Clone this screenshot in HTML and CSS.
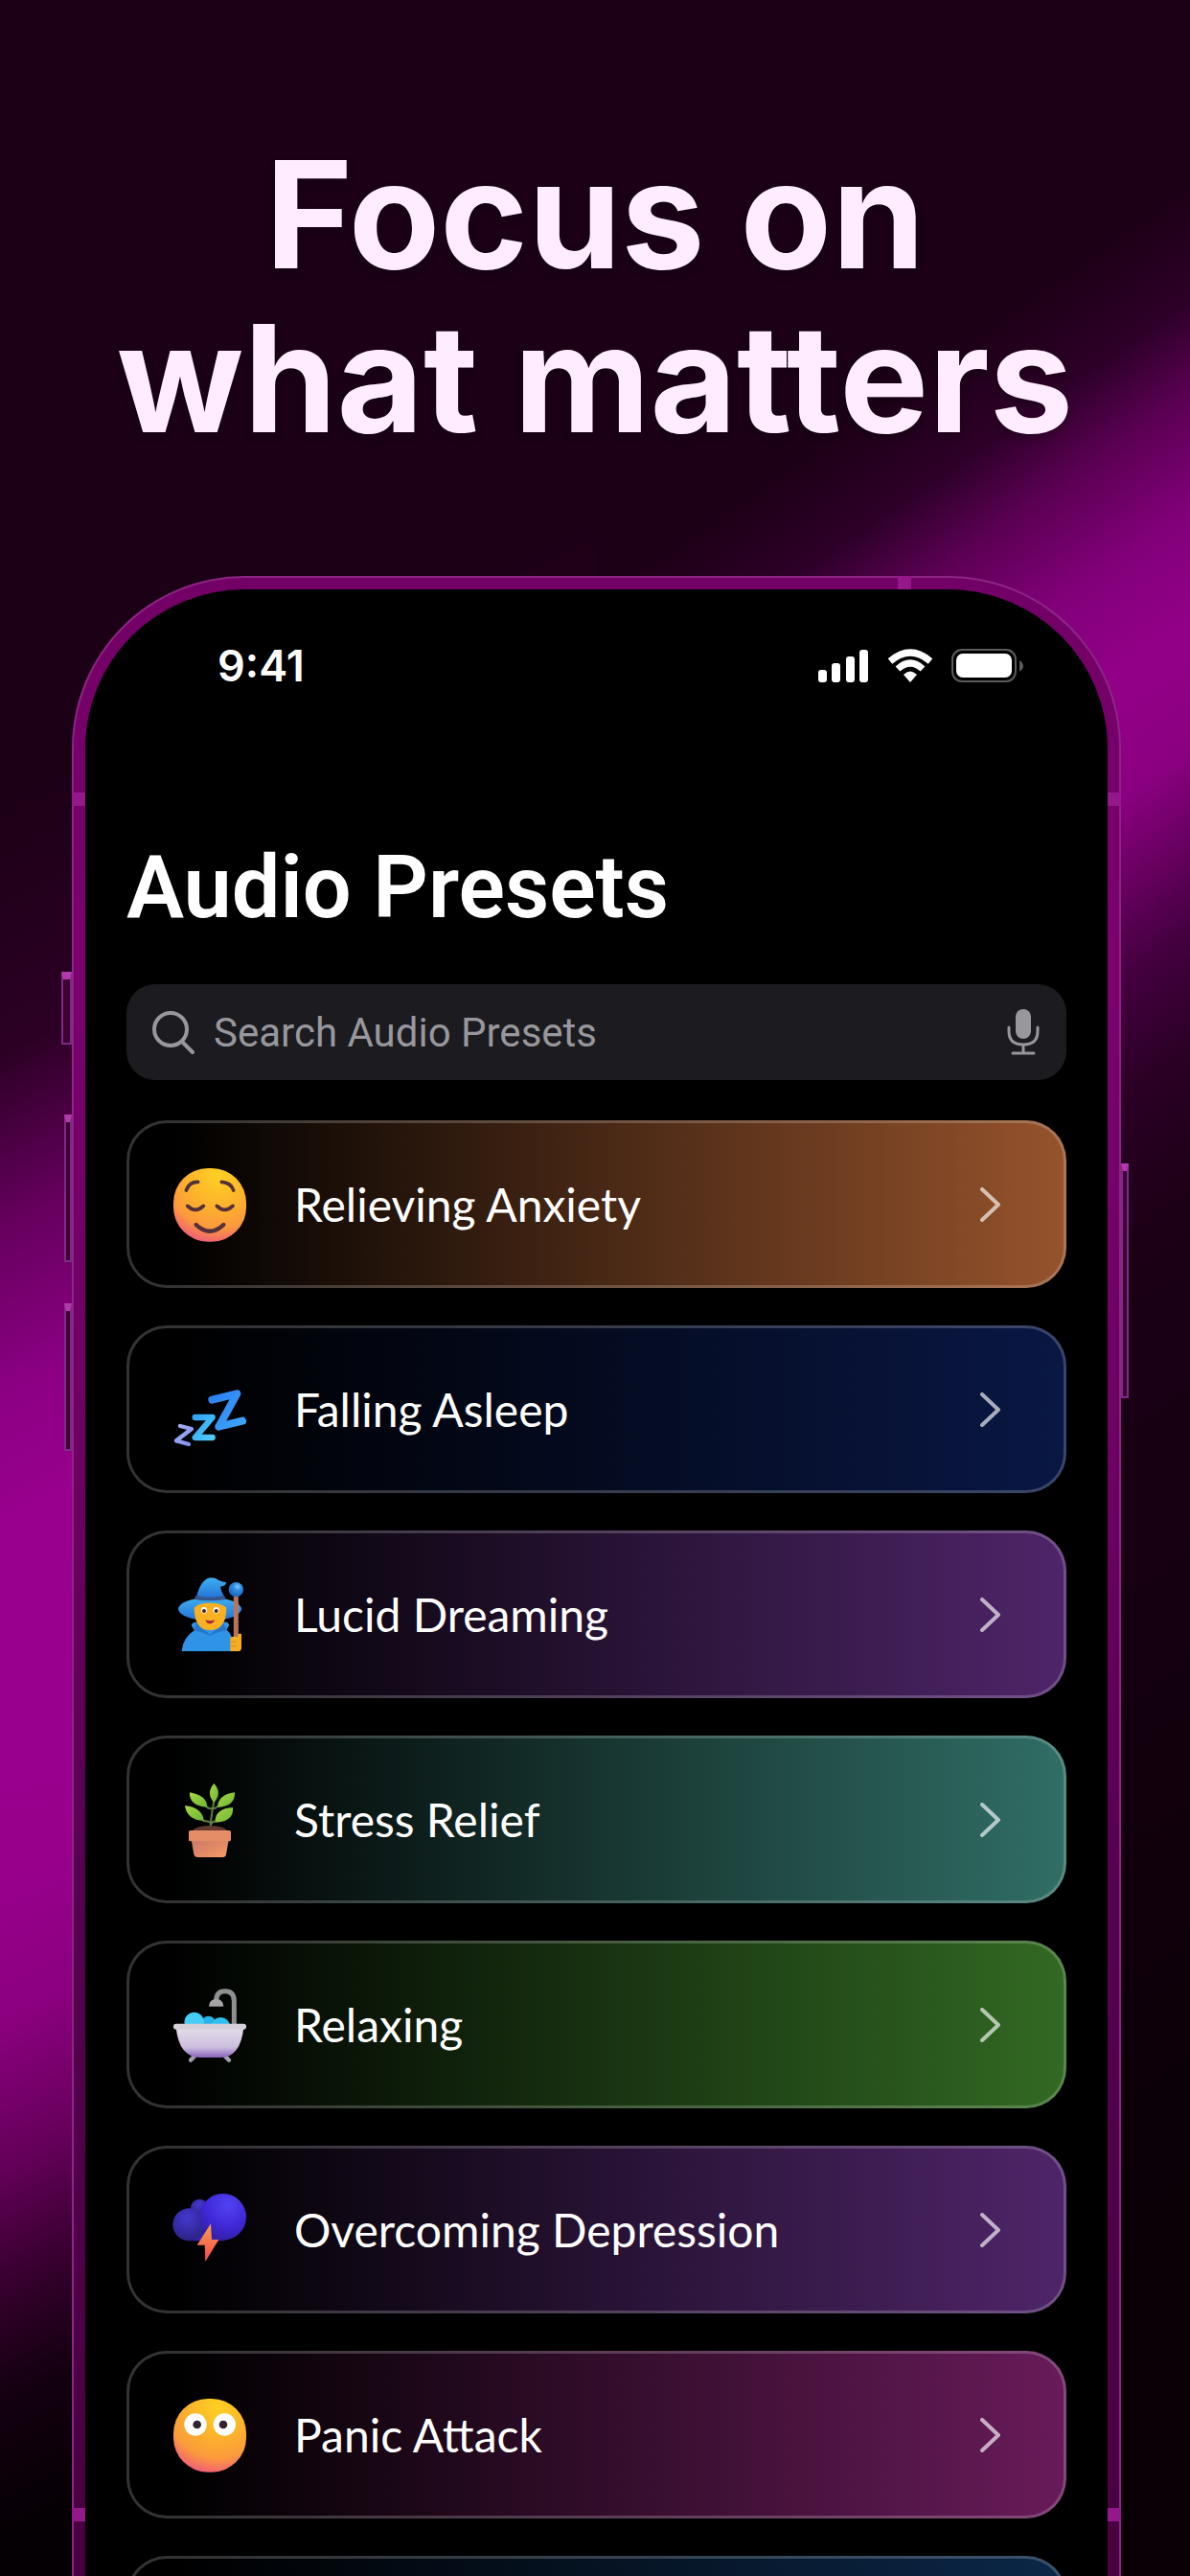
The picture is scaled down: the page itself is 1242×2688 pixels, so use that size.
FILE: index.html
```html
<!DOCTYPE html>
<html lang="en">
<head>
  <meta charset="UTF-8" />
  <meta name="viewport" content="width=device-width, initial-scale=1" />
  <title>Audio Presets - Focus on what matters</title>
  <link rel="stylesheet" href="styles.css">
</head>
<body>

  <!-- Shared gradients and the chevron -->
  <svg class="defs" width="0" height="0" aria-hidden="true">
    <defs>
      <radialGradient id="face" cx="0.62" cy="0.1" r="0.95">
        <stop offset="0" stop-color="#ffd023" />
        <stop offset="0.45" stop-color="#fcb22c" />
        <stop offset="0.75" stop-color="#fb9a3c" />
        <stop offset="1" stop-color="#f0587e" />
      </radialGradient>
      <linearGradient id="bigZ" x1="0" y1="0" x2="1" y2="1">
        <stop offset="0" stop-color="#2b7ff2" />
        <stop offset="1" stop-color="#3fa4fb" />
      </linearGradient>
      <linearGradient id="midZ" x1="0" y1="0" x2="1" y2="1">
        <stop offset="0" stop-color="#30a6f5" />
        <stop offset="1" stop-color="#50c8fa" />
      </linearGradient>
      <linearGradient id="smallZ" x1="0" y1="0" x2="1" y2="1">
        <stop offset="0" stop-color="#a5b0f5" />
        <stop offset="1" stop-color="#7d8ff0" />
      </linearGradient>
      <linearGradient id="hat" x1="0" y1="0" x2="0" y2="1">
        <stop offset="0" stop-color="#3fb0f2" />
        <stop offset="1" stop-color="#2470d6" />
      </linearGradient>
      <radialGradient id="orb" cx="0.6" cy="0.3" r="0.7">
        <stop offset="0" stop-color="#7cc8f8" />
        <stop offset="0.4" stop-color="#2c8ce0" />
        <stop offset="1" stop-color="#1d62bd" />
      </radialGradient>
      <linearGradient id="leaf" x1="0" y1="0" x2="1" y2="1">
        <stop offset="0" stop-color="#a6d843" />
        <stop offset="1" stop-color="#6fb535" />
      </linearGradient>
      <linearGradient id="pot" x1="0" y1="0" x2="1" y2="1">
        <stop offset="0" stop-color="#c9776b" />
        <stop offset="1" stop-color="#f79a63" />
      </linearGradient>
      <linearGradient id="tub" x1="0" y1="0" x2="0" y2="1">
        <stop offset="0" stop-color="#e4dde8" />
        <stop offset="0.65" stop-color="#cdbfdf" />
        <stop offset="1" stop-color="#8a63b8" />
      </linearGradient>
      <radialGradient id="cloudBig" cx="0.6" cy="0.25" r="0.8">
        <stop offset="0" stop-color="#5243f2" />
        <stop offset="0.6" stop-color="#3f27d6" />
        <stop offset="1" stop-color="#2f1f9e" />
      </radialGradient>
      <radialGradient id="cloudSmall" cx="0.45" cy="0.3" r="0.75">
        <stop offset="0" stop-color="#4438cf" />
        <stop offset="1" stop-color="#2a2180" />
      </radialGradient>
      <linearGradient id="bolt" x1="0" y1="0" x2="0" y2="1">
        <stop offset="0" stop-color="#f7a04b" />
        <stop offset="1" stop-color="#f5484f" />
      </linearGradient>
      <symbol id="chevron" viewBox="0 0 22 38">
        <path d="M2 3 L19 19 L2 35" fill="none" stroke="currentColor" stroke-width="4" stroke-linecap="round" stroke-linejoin="round" />
      </symbol>
    </defs>
  </svg>

  <h1 class="headline">Focus on<br>what matters</h1>

  <div class="phone">
    <span class="side-button action"></span>
    <span class="side-button volume-up"></span>
    <span class="side-button volume-down"></span>
    <span class="side-button power"></span>
    <span class="antenna antenna-top"></span>
    <span class="antenna antenna-left"></span>
    <span class="antenna antenna-right"></span>
    <span class="antenna antenna-left low"></span>
    <span class="antenna antenna-right low"></span>

    <main class="screen">
      <div class="status-bar">
        <span class="time">9:41</span>
        <div class="status-icons">
          <svg width="54" height="36" viewBox="0 0 54 36" fill="#fff" aria-label="Signal">
            <rect x="1" y="22" width="9" height="13" rx="3" />
            <rect x="15" y="15" width="9" height="20" rx="3" />
            <rect x="30" y="8" width="9" height="27" rx="3" />
            <rect x="44" y="1" width="9" height="34" rx="3" />
          </svg>
          <svg width="48" height="36" viewBox="0 0 48 36" aria-label="Wi-Fi">
            <g fill="none" stroke="#fff" stroke-width="7">
              <path d="M3 13 Q24 -5 45 13" />
              <path d="M11 21 Q24 9 37 21" />
            </g>
            <path d="M17 27 Q24 20 31 27 L24 35 Z" fill="#fff" />
          </svg>
          <svg width="76" height="36" viewBox="0 0 76 36" aria-label="Battery">
            <rect x="1" y="1" width="66" height="33" rx="10" fill="none" stroke="#5c5c5c" stroke-width="2" />
            <rect x="5" y="5" width="58" height="25" rx="7" fill="#fff" />
            <path d="M71 12 Q79 18 71 24 Z" fill="#5c5c5c" />
          </svg>
        </div>
      </div>

      <h2 class="title">Audio Presets</h2>

      <form class="search">
        <svg width="44" height="46" viewBox="0 0 44 46" fill="none" stroke="#98979d" stroke-width="4" stroke-linecap="round" aria-hidden="true">
          <circle cx="19" cy="20" r="17" />
          <path d="M31 33 L42 44" />
        </svg>
        <input type="search" placeholder="Search Audio Presets" aria-label="Search Audio Presets" />
        <button type="button" class="mic" aria-label="Dictate">
          <svg width="34" height="50" viewBox="0 0 34 50">
            <rect x="9" y="1" width="16" height="31" rx="8" fill="#98979d" />
            <path d="M2 20 V24 Q2 38 17 38 Q32 38 32 24 V20 M17 38 V47 M6 47 H28" fill="none" stroke="#98979d" stroke-width="3" stroke-linecap="round" />
          </svg>
        </button>
      </form>

      <nav class="presets">
        <a href="#anxiety" class="preset orange">
          <svg class="emoji" viewBox="0 0 228 228">
            <rect width="228" height="230" rx="108" fill="url(#face)" />
            <g fill="none" stroke="#53303a" stroke-width="11" stroke-linecap="round">
              <path d="M40 69 Q50 42 77 43" />
              <path d="M151 43 Q180 45 188 69" />
              <path d="M44 118 Q69 142 94 118" />
              <path d="M136 118 Q160 142 186 118" />
              <path d="M71 177 Q114 218 157 177" stroke-width="13" />
            </g>
          </svg>
          <span class="name">Relieving Anxiety</span>
          <svg class="chevron"><use href="#chevron" /></svg>
        </a>
        <a href="#asleep" class="preset blue">
          <svg class="emoji" viewBox="0 0 228 228">
            <g fill="none" stroke-linecap="round" stroke-linejoin="round">
              <path d="M21 165 L57 174 L9 211 L48 222" stroke="url(#smallZ)" stroke-width="13" />
              <path d="M68 138 H122 L68 201 H122" stroke="url(#midZ)" stroke-width="19" />
              <path d="M121 83 L199 64 L142 167 L216 149" stroke="url(#bigZ)" stroke-width="24" />
            </g>
          </svg>
          <span class="name">Falling Asleep</span>
          <svg class="chevron"><use href="#chevron" /></svg>
        </a>
        <a href="#lucid" class="preset purple">
          <svg class="emoji" viewBox="0 0 228 228">
            <path d="M26 228 Q30 184 66 163 L56 147 Q62 134 74 138 L154 138 Q170 132 175 146 L166 162 Q186 172 190 228 Z" fill="#2f93e6" />
            <path d="M66 163 Q70 140 74 138 L114 176 L156 138 Q162 150 166 162 Q140 168 114 179 Q90 168 66 163 Z" fill="#2478cd" />
            <ellipse cx="114" cy="96" rx="99" ry="36" fill="url(#hat)" />
            <path d="M65 92 Q80 76 114 77 Q150 76 166 92 Q166 162 114 162 Q66 162 65 92 Z" fill="#f9b122" />
            <path d="M72 58 Q86 2 116 -2 Q132 -2 140 5 Q156 12 165 12 Q165 24 148 26 Q146 34 160 58 Q114 70 72 58 Z" fill="url(#hat)" />
            <path d="M71 54 Q114 64 159 54 L165 66 Q114 74 64 66 Z" fill="#35558b" />
            <ellipse cx="96" cy="100" rx="9" ry="10" fill="#fff" />
            <ellipse cx="134" cy="100" rx="9" ry="10" fill="#fff" />
            <circle cx="96" cy="102" r="6" fill="#3f2530" />
            <circle cx="134" cy="102" r="6" fill="#3f2530" />
            <path d="M100 130 Q114 136 129 130 Q125 142 114 142 Q104 142 100 130 Z" fill="#a3263d" />
            <path d="M196 55 V186" stroke="#b9745a" stroke-width="15" />
            <circle cx="196" cy="35" r="23" fill="url(#orb)" />
            <path d="M178 228 V188 Q178 182 188 182 H202 V173 H213 V216 Q213 228 204 228 Z" fill="#f6ae21" />
            <path d="M180 198 H198 M180 212 H198" stroke="#d98620" stroke-width="3" />
          </svg>
          <span class="name">Lucid Dreaming</span>
          <svg class="chevron"><use href="#chevron" /></svg>
        </a>
        <a href="#stress" class="preset teal">
          <svg class="emoji" viewBox="0 0 228 228">
            <path d="M116 136 Q118 100 127 56 M104 74 Q112 80 122 78 M92 116 Q108 118 116 122 M138 72 Q130 80 122 78 M130 118 Q122 120 117 128" fill="none" stroke="#5d7d4a" stroke-width="6" />
            <g fill="url(#leaf)">
              <path d="M127 0 Q101 30 127 60 Q154 30 127 0 Z" />
              <path d="M51 28 Q48 70 106 75 Q106 38 51 28 Z" />
              <path d="M36 69 Q42 114 95 117 Q92 76 36 69 Z" />
              <path d="M192 28 Q194 72 138 75 Q140 34 192 28 Z" />
              <path d="M186 75 Q190 120 130 122 Q130 78 186 75 Z" />
            </g>
            <ellipse cx="114" cy="150" rx="54" ry="18" fill="#63382c" />
            <path d="M56 176 H173 L165 222 Q164 231 154 231 H76 Q66 231 64 222 Z" fill="url(#pot)" />
            <rect x="48" y="147" width="132" height="34" rx="5" fill="#e48d66" />
          </svg>
          <span class="name">Stress Relief</span>
          <svg class="chevron"><use href="#chevron" /></svg>
        </a>
        <a href="#relaxing" class="preset green">
          <svg class="emoji" viewBox="0 0 228 228">
            <circle cx="110" cy="108" r="22" fill="#27b4e6" />
            <circle cx="65" cy="105" r="31" fill="#45cdf5" />
            <circle cx="148" cy="120" r="30" fill="#2fc0ee" />
            <path d="M190 114 V38 Q190 8 161 8 Q134 8 134 38" fill="none" stroke="#8f9092" stroke-width="15" />
            <path d="M111 56 Q112 33 134 33 Q156 33 157 56 Z" fill="#a5a4a6" />
            <path d="M70 208 L54 224 M158 208 L174 224" stroke="#a39fae" stroke-width="13" stroke-linecap="round" />
            <path d="M8 122 H220 Q210 216 146 216 H82 Q18 214 8 122 Z" fill="url(#tub)" />
            <rect x="0" y="110" width="228" height="18" rx="8" fill="#d5cfd9" />
          </svg>
          <span class="name">Relaxing</span>
          <svg class="chevron"><use href="#chevron" /></svg>
        </a>
        <a href="#depression" class="preset purple">
          <svg class="emoji" viewBox="0 0 228 228">
            <circle cx="82" cy="45" r="28" fill="url(#cloudSmall)" />
            <path d="M48 100 H160 V148 H48 Z" fill="#3322b0" />
            <circle cx="49" cy="97" r="51" fill="url(#cloudSmall)" />
            <circle cx="155" cy="73" r="73" fill="url(#cloudBig)" />
            <path d="M117 94 L120 144 H142 L100 213 L98 161 H74 Z" fill="url(#bolt)" />
          </svg>
          <span class="name">Overcoming Depression</span>
          <svg class="chevron"><use href="#chevron" /></svg>
        </a>
        <a href="#panic" class="preset pink">
          <svg class="emoji" viewBox="0 0 228 228">
            <rect width="228" height="230" rx="108" fill="url(#face)" />
            <circle cx="69" cy="81" r="35" fill="#fff" />
            <circle cx="160" cy="81" r="35" fill="#fff" />
            <circle cx="74" cy="81" r="13" fill="#33242c" />
            <circle cx="156" cy="81" r="13" fill="#33242c" />
          </svg>
          <span class="name">Panic Attack</span>
          <svg class="chevron"><use href="#chevron" /></svg>
        </a>
        <a href="#more" class="preset navy" aria-label="More presets"></a>
      </nav>
    </main>
  </div>

</body>
</html>
```
FILE: styles.css
```css
* {
  box-sizing: border-box;
}

html, body {
  margin: 0;
  height: 100%;
  overflow: hidden;
}

/* one glow on each side, the seam runs behind the phone */
body {
  display: flex;
  flex-direction: column;
  background-color: #1c0016;
  background-image:
    linear-gradient(155deg, #1c0016 28%, #2c0025 37%, #66005e 43%, #8c0084 49%, #9a008e 54%, #98008c 66%, #8a007e 71%, #640059 76%, #38002f 80%, #140010 84%, #050004 89%),
    linear-gradient(145deg, #1c0016 20%, #2e0029 24%, #5a0052 27%, #82007a 31%, #930088 35%, #8a0080 39%, #680060 42%, #440040 45%, #2b0025 49%, #1c0016 54%, #080005 90%);
  background-size: 50% 100%;
  background-position: left top, right top;
  background-repeat: no-repeat;
  color: #fff;
  font-family: Inter, sans-serif;
}

.defs {
  position: absolute;
}

.headline {
  margin: 0;
  padding: 138px 0 121px;
  font-size: 156px;
  font-weight: 700;
  line-height: 171px;
  text-align: center;
  color: #ffedff;
  text-shadow: 0 4px 8px rgba(0, 0, 0, 0.3);
}

/* Phone */
.phone {
  position: relative;
  flex: 1;
  min-height: 0;
  margin: 0 72px 0 75px;
  padding: 12px 12px 0;
  border: 2px solid #8c2584;
  border-bottom: 0;
  border-radius: 180px 180px 0 0;
  background: linear-gradient(#720066, #7a006e 20%, #6d0062 45%, #560050 65%, #480040);
}

.screen {
  height: 100%;
  padding: 54px 43px 0;
  border-radius: 166px 166px 0 0;
  background: #000;
  overflow: hidden;
}

.side-button {
  position: absolute;
  width: 8px;
  border: 2px solid #7d2c86;
  border-top: 8px solid #b33aae;
  background: #3f0036;
}

.action {
  left: -13px;
  top: 411px;
  width: 11px;
  height: 76px;
}

.volume-up {
  left: -10px;
  top: 560px;
  height: 154px;
}

.volume-down {
  left: -10px;
  top: 757px;
  height: 154px;
}

.power {
  right: -10px;
  top: 611px;
  height: 245px;
}

.antenna {
  position: absolute;
  width: 14px;
  height: 14px;
  background: #94188a;
}

.antenna-top {
  top: -2px;
  left: 860px;
}

.antenna-left {
  top: 224px;
  left: -2px;
}

.antenna-right {
  top: 224px;
  right: -2px;
}

.low {
  top: 2014px;
}

/* Status bar */
.status-bar {
  display: flex;
  align-items: center;
  justify-content: space-between;
  height: 52px;
  padding: 0 44px 0 95px;
}

.time {
  font-size: 45px;
  font-weight: 600;
  line-height: 52px;
}

.status-icons {
  display: flex;
  align-items: center;
  gap: 19px;
}

.title {
  margin: 146px 0 0;
  font-family: Roboto, sans-serif;
  font-size: 90px;
  font-weight: 600;
  line-height: 120px;
  white-space: nowrap;
}

/* Search */
.search {
  display: flex;
  align-items: center;
  height: 100px;
  margin-top: 40px;
  padding: 0 28px 0 27px;
  border-radius: 30px;
  background: #1c1b1f;
}

.search input {
  flex: 1;
  min-width: 0;
  margin: 0 20px;
  padding: 0;
  border: 0;
  outline: 0;
  background: none;
  color: #fff;
  font-family: Roboto, sans-serif;
  font-size: 42px;
}

.search input::placeholder {
  color: #98979d;
  opacity: 1;
}

.mic {
  display: flex;
  padding: 0;
  border: 0;
  background: none;
  cursor: pointer;
}

/* Presets */
.presets {
  display: flex;
  flex-direction: column;
  gap: 39px;
  margin-top: 42px;
}

.preset {
  display: flex;
  align-items: center;
  flex-shrink: 0;
  height: 175px;
  padding: 0 65px 0 46px;
  border: 3px solid rgba(255, 255, 255, 0.2);
  border-radius: 42px;
  background-origin: border-box;
  color: #fff;
  text-decoration: none;
}

.emoji {
  width: 76px;
  height: 76px;
  overflow: visible;
}

.name {
  flex: 1;
  margin-left: 50px;
  font-family: Lato, sans-serif;
  font-size: 48px;
  line-height: 60px;
}

.chevron {
  width: 22px;
  height: 38px;
  opacity: 0.65;
}

.orange {
  background-image: linear-gradient(90deg, #000 5%, #96532c);
}

.blue {
  background-image: linear-gradient(90deg, #000 5%, #091744);
}

.purple {
  background-image: linear-gradient(90deg, #000 5%, #4f2569);
}

.teal {
  background-image: linear-gradient(90deg, #000 5%, #306e65);
}

.green {
  background-image: linear-gradient(90deg, #000 5%, #326923);
}

.pink {
  background-image: linear-gradient(90deg, #000 5%, #681b59);
}

.navy {
  background-image: linear-gradient(90deg, #000 5%, #0b2748);
}
```
